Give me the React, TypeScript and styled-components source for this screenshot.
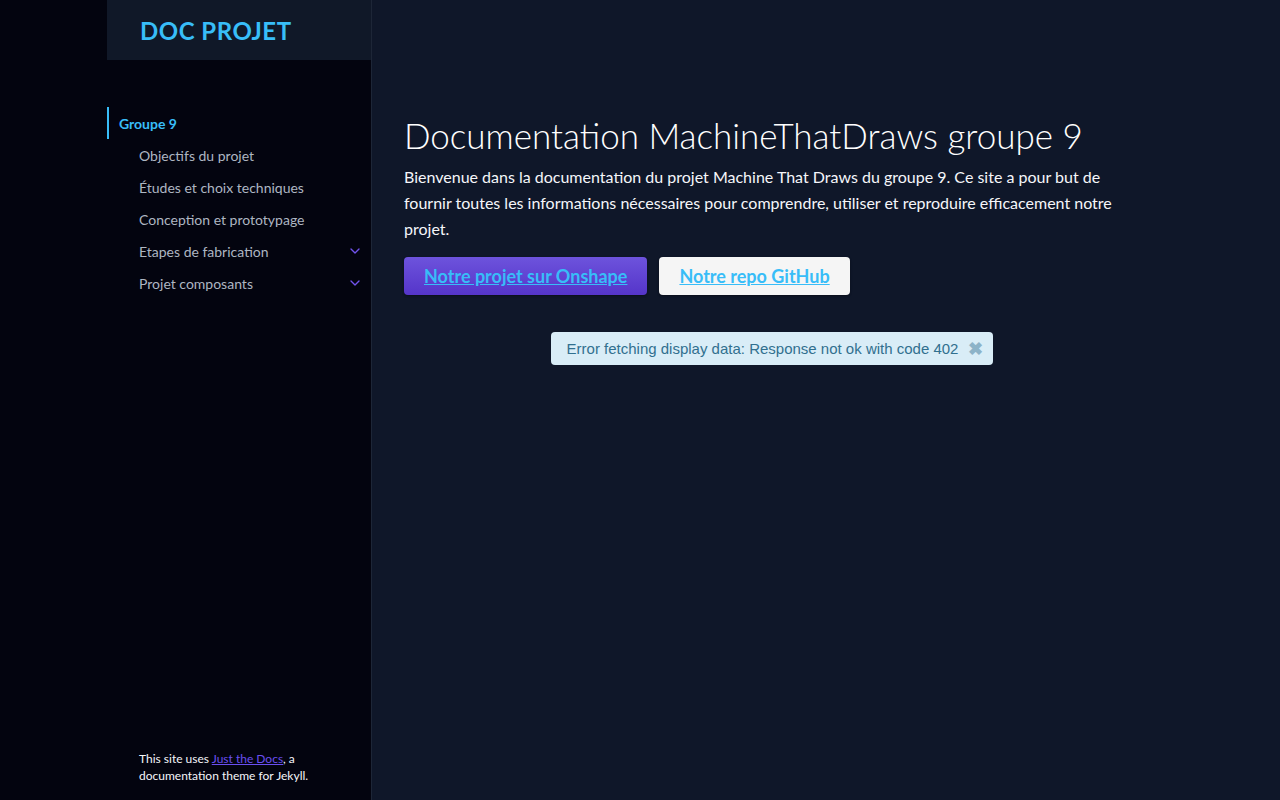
import styled, { createGlobalStyle } from 'styled-components';

const GlobalStyle = createGlobalStyle`
  html, body {
    margin: 0;
    padding: 0;
    height: 100%;
    background: #0f1729;
  }
  #root {
    height: 100%;
  }
  * {
    box-sizing: border-box;
  }
`;

const Page = styled.div`
  display: flex;
  height: 800px;
  width: 1280px;
  font-family: Lato, 'Noto Sans', sans-serif;
  background: #0f1729;
`;

const SideBar = styled.aside`
  display: flex;
  flex-direction: column;
  width: 372px;
  padding-left: 107px;
  background: #03040f;
  border-right: 1px solid #1d2637;
`;

const SiteHeader = styled.div`
  height: 60px;
  display: flex;
  align-items: center;
  padding-left: 33px;
  background: #101828;
`;

const SiteTitle = styled.a`
  font-size: 24px;
  font-weight: 700;
  letter-spacing: 0.5px;
  color: #38bdf8;
  text-decoration: none;
`;

const Nav = styled.ul`
  list-style: none;
  margin: 47px 0 0;
  padding: 0;
`;

const NavItem = styled.li<{ $active?: boolean; $child?: boolean }>`
  display: flex;
  align-items: center;
  justify-content: space-between;
  height: 32px;
  padding-left: ${p => (p.$child ? '30px' : '10px')};
  padding-right: 8px;
  border-left: 2px solid ${p => (p.$active ? '#38bdf8' : 'transparent')};
  font-size: 14px;
  font-weight: ${p => (p.$active ? 700 : 400)};
  color: ${p => (p.$active ? '#38bdf8' : '#aeb6c2')};
`;

const Chevron = () => (
  <svg width="16" height="16" viewBox="0 0 24 24" fill="none" stroke="#7253ed" strokeWidth="2" strokeLinecap="round" strokeLinejoin="round">
    <polyline points="6 9 12 15 18 9" />
  </svg>
);

const Footer = styled.footer`
  margin-top: auto;
  padding: 0 20px 16px 32px;
  font-size: 12px;
  line-height: 17px;
  color: #f5f6fa;

  a {
    color: #6a4ff0;
  }
`;

const Main = styled.main`
  flex: 1;
  padding: 110px 32px 0 32px;
`;

const Content = styled.div`
  width: 736px;
  color: #ffffff;
`;

const Title = styled.h1`
  margin: 0 0 4px;
  font-size: 35px;
  font-weight: 300;
  line-height: 50px;
  color: #ffffff;
`;

const Lead = styled.p`
  margin: 0 0 15px;
  font-size: 16px;
  line-height: 26px;
  color: #f5f6fa;
`;

const Buttons = styled.div`
  display: flex;
  gap: 12px;
`;

const Button = styled.a<{ $primary?: boolean }>`
  display: inline-flex;
  align-items: center;
  height: 38px;
  padding: 0 20px;
  border-radius: 4px;
  font-size: 18px;
  font-weight: 700;
  color: #38bdf8;
  text-decoration: underline;
  background: ${p => (p.$primary ? 'linear-gradient(#6d53dc, #5535c9)' : '#f5f5f5')};
  box-shadow: 0 1px 3px rgba(0, 0, 0, 0.12), 0 1px 2px rgba(0, 0, 0, 0.24);
`;

const AlertRow = styled.div`
  display: flex;
  justify-content: center;
  margin-top: 37px;
`;

const Alert = styled.div`
  display: flex;
  align-items: center;
  gap: 10px;
  height: 33px;
  padding: 0 10px 0 16px;
  border-radius: 4px;
  background: #d9edf7;
  color: #31708f;
  font-family: 'Liberation Sans', Arial, sans-serif;
  font-size: 15px;
`;

const Close = styled.span`
  font-size: 18px;
  font-weight: 700;
  color: #8db3c8;
`;

export default function App() {
  return (
    <>
      <GlobalStyle />
      <Page>
        <SideBar>
          <SiteHeader>
            <SiteTitle>DOC PROJET</SiteTitle>
          </SiteHeader>
          <Nav>
            <NavItem $active>Groupe 9</NavItem>
            <NavItem $child>Objectifs du projet</NavItem>
            <NavItem $child>Études et choix techniques</NavItem>
            <NavItem $child>Conception et prototypage</NavItem>
            <NavItem $child>
              Etapes de fabrication
              <Chevron />
            </NavItem>
            <NavItem $child>
              Projet composants
              <Chevron />
            </NavItem>
          </Nav>
          <Footer>
            This site uses <a href="#">Just the Docs</a>, a documentation theme for Jekyll.
          </Footer>
        </SideBar>
        <Main>
          <Content>
            <Title>Documentation MachineThatDraws groupe 9</Title>
            <Lead>
              Bienvenue dans la documentation du projet Machine That Draws du groupe 9. Ce site a pour but de
              fournir toutes les informations nécessaires pour comprendre, utiliser et reproduire efficacement notre
              projet.
            </Lead>
            <Buttons>
              <Button $primary>Notre projet sur Onshape</Button>
              <Button>Notre repo GitHub</Button>
            </Buttons>
            <AlertRow>
              <Alert>
                Error fetching display data: Response not ok with code 402
                <Close>✖</Close>
              </Alert>
            </AlertRow>
          </Content>
        </Main>
      </Page>
    </>
  );
}
